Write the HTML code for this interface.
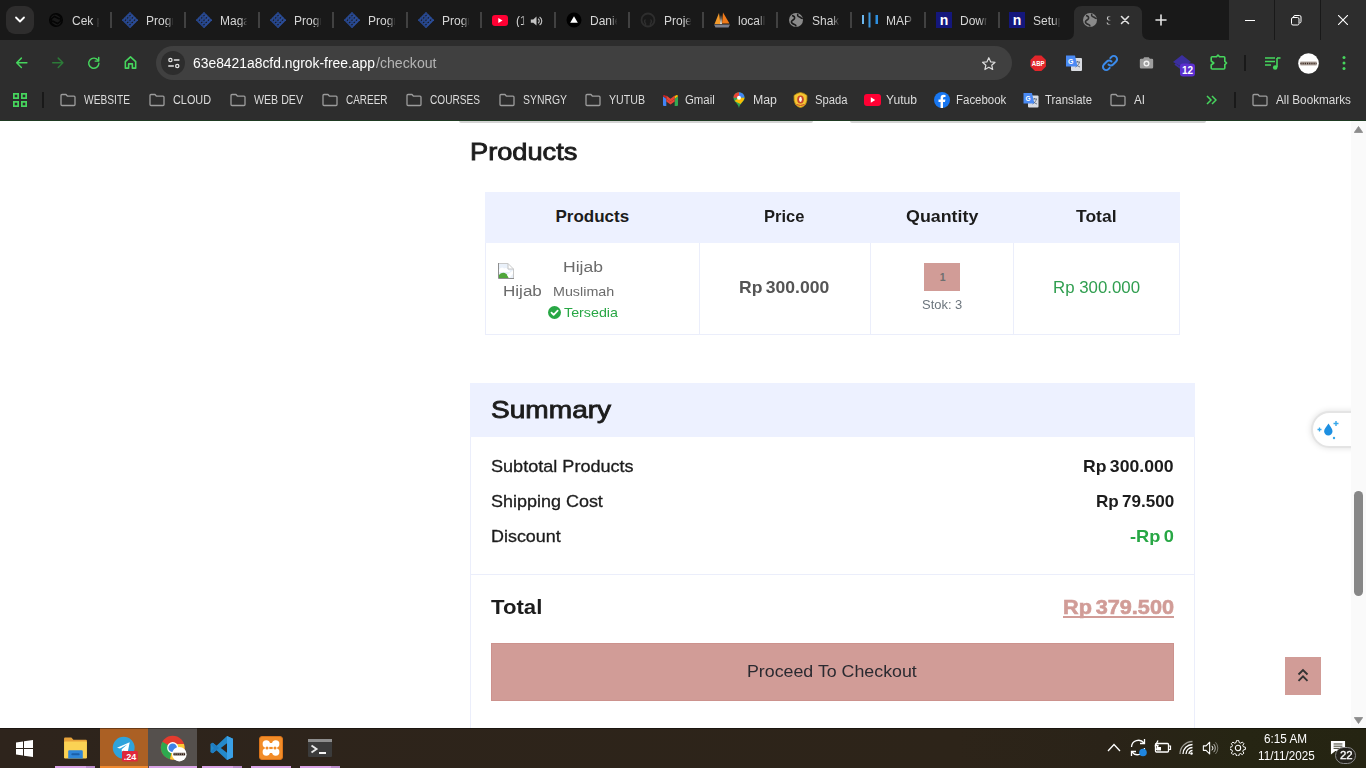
<!DOCTYPE html>
<html lang="id"><head><meta charset="utf-8"><title>Checkout</title>
<style>
html,body{margin:0;padding:0;}
body{width:1366px;height:768px;overflow:hidden;position:relative;background:#fff;font-family:"Liberation Sans",sans-serif;}
.b{position:absolute;display:block;}
.t{position:absolute;white-space:nowrap;line-height:1;display:block;}
</style></head>
<body>
<!-- browser chrome -->
<div id="chrome" class="b" style="left:0;top:0;width:1366px;height:121px;background:#2d2d2d;">
<div class="b" style="left:0px;top:0px;width:1229px;height:40px;background:#191919;"></div>
<div class="b" style="left:1229px;top:0px;width:137px;height:40px;background:#2d2d2d;"></div>
<div class="b" style="left:1274px;top:0px;width:1px;height:40px;background:#191919;"></div>
<div class="b" style="left:1320px;top:0px;width:1px;height:40px;background:#191919;"></div>
<div class="b" style="left:0px;top:120px;width:1366px;height:1px;background:#1f3a22;"></div>
<div class="b" style="left:6px;top:6px;width:28px;height:28px;background:#2e2d2d;border-radius:9px;"></div>
<svg class="b" style="left:14px;top:15px;" width="12" height="10" viewBox="0 0 12 10" ><path d="M2 2.5 L6 6.5 L10 2.5" fill="none" stroke="#fff" stroke-width="1.8" stroke-linecap="round" stroke-linejoin="round"/></svg>
<span class="t" style="left:72px;top:14.9px;font-size:12px;color:#d6d6d6;width:28px;overflow:hidden;-webkit-mask-image:linear-gradient(90deg,#000 72%,transparent 98%);mask-image:linear-gradient(90deg,#000 72%,transparent 98%);">Cek pr</span>
<div class="b" style="left:110px;top:12px;width:2px;height:16px;background:#414141;"></div>
<span class="t" style="left:146px;top:14.9px;font-size:12px;color:#d6d6d6;width:28px;overflow:hidden;-webkit-mask-image:linear-gradient(90deg,#000 72%,transparent 98%);mask-image:linear-gradient(90deg,#000 72%,transparent 98%);">Progr</span>
<div class="b" style="left:184px;top:12px;width:2px;height:16px;background:#414141;"></div>
<span class="t" style="left:220px;top:14.9px;font-size:12px;color:#d6d6d6;width:28px;overflow:hidden;-webkit-mask-image:linear-gradient(90deg,#000 72%,transparent 98%);mask-image:linear-gradient(90deg,#000 72%,transparent 98%);">Magang</span>
<div class="b" style="left:258px;top:12px;width:2px;height:16px;background:#414141;"></div>
<span class="t" style="left:294px;top:14.9px;font-size:12px;color:#d6d6d6;width:28px;overflow:hidden;-webkit-mask-image:linear-gradient(90deg,#000 72%,transparent 98%);mask-image:linear-gradient(90deg,#000 72%,transparent 98%);">Progr</span>
<div class="b" style="left:332px;top:12px;width:2px;height:16px;background:#414141;"></div>
<span class="t" style="left:368px;top:14.9px;font-size:12px;color:#d6d6d6;width:28px;overflow:hidden;-webkit-mask-image:linear-gradient(90deg,#000 72%,transparent 98%);mask-image:linear-gradient(90deg,#000 72%,transparent 98%);">Progr</span>
<div class="b" style="left:406px;top:12px;width:2px;height:16px;background:#414141;"></div>
<span class="t" style="left:442px;top:14.9px;font-size:12px;color:#d6d6d6;width:28px;overflow:hidden;-webkit-mask-image:linear-gradient(90deg,#000 72%,transparent 98%);mask-image:linear-gradient(90deg,#000 72%,transparent 98%);">Progr</span>
<div class="b" style="left:480px;top:12px;width:2px;height:16px;background:#414141;"></div>
<span class="t" style="left:516px;top:14.9px;font-size:12px;color:#d6d6d6;width:9px;overflow:hidden;-webkit-mask-image:linear-gradient(90deg,#000 72%,transparent 98%);mask-image:linear-gradient(90deg,#000 72%,transparent 98%);">(1</span>
<div class="b" style="left:554px;top:12px;width:2px;height:16px;background:#414141;"></div>
<span class="t" style="left:590px;top:14.9px;font-size:12px;color:#d6d6d6;width:28px;overflow:hidden;-webkit-mask-image:linear-gradient(90deg,#000 72%,transparent 98%);mask-image:linear-gradient(90deg,#000 72%,transparent 98%);">Daniel</span>
<div class="b" style="left:628px;top:12px;width:2px;height:16px;background:#414141;"></div>
<span class="t" style="left:664px;top:14.9px;font-size:12px;color:#d6d6d6;width:28px;overflow:hidden;-webkit-mask-image:linear-gradient(90deg,#000 72%,transparent 98%);mask-image:linear-gradient(90deg,#000 72%,transparent 98%);">Projec</span>
<div class="b" style="left:702px;top:12px;width:2px;height:16px;background:#414141;"></div>
<span class="t" style="left:738px;top:14.9px;font-size:12px;color:#d6d6d6;width:28px;overflow:hidden;-webkit-mask-image:linear-gradient(90deg,#000 72%,transparent 98%);mask-image:linear-gradient(90deg,#000 72%,transparent 98%);">locall</span>
<div class="b" style="left:776px;top:12px;width:2px;height:16px;background:#414141;"></div>
<span class="t" style="left:812px;top:14.9px;font-size:12px;color:#d6d6d6;width:28px;overflow:hidden;-webkit-mask-image:linear-gradient(90deg,#000 72%,transparent 98%);mask-image:linear-gradient(90deg,#000 72%,transparent 98%);">Shaki</span>
<div class="b" style="left:850px;top:12px;width:2px;height:16px;background:#414141;"></div>
<span class="t" style="left:886px;top:14.9px;font-size:12px;color:#d6d6d6;width:28px;overflow:hidden;-webkit-mask-image:linear-gradient(90deg,#000 72%,transparent 98%);mask-image:linear-gradient(90deg,#000 72%,transparent 98%);">MAP</span>
<div class="b" style="left:924px;top:12px;width:2px;height:16px;background:#414141;"></div>
<span class="t" style="left:960px;top:14.9px;font-size:12px;color:#d6d6d6;width:28px;overflow:hidden;-webkit-mask-image:linear-gradient(90deg,#000 72%,transparent 98%);mask-image:linear-gradient(90deg,#000 72%,transparent 98%);">Down</span>
<div class="b" style="left:998px;top:12px;width:2px;height:16px;background:#414141;"></div>
<span class="t" style="left:1033px;top:14.9px;font-size:12px;color:#d6d6d6;width:28px;overflow:hidden;-webkit-mask-image:linear-gradient(90deg,#000 72%,transparent 98%);mask-image:linear-gradient(90deg,#000 72%,transparent 98%);">Setup</span>
<svg class="b" style="left:48px;top:12px;" width="16" height="16" viewBox="0 0 16 16" ><g fill="none" stroke="#050505" stroke-width="1.5"><circle cx="8" cy="8" r="6.3"/><path d="M8 1.700 L12.5 4.500 V10 M14.300 8 L9.500 11.500 L4.500 9 M8 14.300 L3.500 11.500 V6 M1.700 8 L6.500 4.500 L11.500 7"/></g></svg>
<svg class="b" style="left:122px;top:12px;" width="16" height="16" viewBox="0 0 16 16" ><g transform="translate(8 8) rotate(45)"><rect x="-5.6" y="-5.6" width="1.9" height="11.2" fill="#2b4d98"/><rect x="-5.6" y="-5.6" width="11.2" height="1.9" fill="#264487"/><rect x="-2.3999999999999995" y="-5.6" width="1.9" height="11.2" fill="#2b4d98"/><rect x="-5.6" y="-2.3999999999999995" width="11.2" height="1.9" fill="#264487"/><rect x="0.8000000000000007" y="-5.6" width="1.9" height="11.2" fill="#2b4d98"/><rect x="-5.6" y="0.8000000000000007" width="11.2" height="1.9" fill="#264487"/><rect x="4.000000000000002" y="-5.6" width="1.9" height="11.2" fill="#2b4d98"/><rect x="-5.6" y="4.000000000000002" width="11.2" height="1.9" fill="#264487"/></g></svg>
<svg class="b" style="left:196px;top:12px;" width="16" height="16" viewBox="0 0 16 16" ><g transform="translate(8 8) rotate(45)"><rect x="-5.6" y="-5.6" width="1.9" height="11.2" fill="#2b4d98"/><rect x="-5.6" y="-5.6" width="11.2" height="1.9" fill="#264487"/><rect x="-2.3999999999999995" y="-5.6" width="1.9" height="11.2" fill="#2b4d98"/><rect x="-5.6" y="-2.3999999999999995" width="11.2" height="1.9" fill="#264487"/><rect x="0.8000000000000007" y="-5.6" width="1.9" height="11.2" fill="#2b4d98"/><rect x="-5.6" y="0.8000000000000007" width="11.2" height="1.9" fill="#264487"/><rect x="4.000000000000002" y="-5.6" width="1.9" height="11.2" fill="#2b4d98"/><rect x="-5.6" y="4.000000000000002" width="11.2" height="1.9" fill="#264487"/></g></svg>
<svg class="b" style="left:270px;top:12px;" width="16" height="16" viewBox="0 0 16 16" ><g transform="translate(8 8) rotate(45)"><rect x="-5.6" y="-5.6" width="1.9" height="11.2" fill="#2b4d98"/><rect x="-5.6" y="-5.6" width="11.2" height="1.9" fill="#264487"/><rect x="-2.3999999999999995" y="-5.6" width="1.9" height="11.2" fill="#2b4d98"/><rect x="-5.6" y="-2.3999999999999995" width="11.2" height="1.9" fill="#264487"/><rect x="0.8000000000000007" y="-5.6" width="1.9" height="11.2" fill="#2b4d98"/><rect x="-5.6" y="0.8000000000000007" width="11.2" height="1.9" fill="#264487"/><rect x="4.000000000000002" y="-5.6" width="1.9" height="11.2" fill="#2b4d98"/><rect x="-5.6" y="4.000000000000002" width="11.2" height="1.9" fill="#264487"/></g></svg>
<svg class="b" style="left:344px;top:12px;" width="16" height="16" viewBox="0 0 16 16" ><g transform="translate(8 8) rotate(45)"><rect x="-5.6" y="-5.6" width="1.9" height="11.2" fill="#2b4d98"/><rect x="-5.6" y="-5.6" width="11.2" height="1.9" fill="#264487"/><rect x="-2.3999999999999995" y="-5.6" width="1.9" height="11.2" fill="#2b4d98"/><rect x="-5.6" y="-2.3999999999999995" width="11.2" height="1.9" fill="#264487"/><rect x="0.8000000000000007" y="-5.6" width="1.9" height="11.2" fill="#2b4d98"/><rect x="-5.6" y="0.8000000000000007" width="11.2" height="1.9" fill="#264487"/><rect x="4.000000000000002" y="-5.6" width="1.9" height="11.2" fill="#2b4d98"/><rect x="-5.6" y="4.000000000000002" width="11.2" height="1.9" fill="#264487"/></g></svg>
<svg class="b" style="left:418px;top:12px;" width="16" height="16" viewBox="0 0 16 16" ><g transform="translate(8 8) rotate(45)"><rect x="-5.6" y="-5.6" width="1.9" height="11.2" fill="#2b4d98"/><rect x="-5.6" y="-5.6" width="11.2" height="1.9" fill="#264487"/><rect x="-2.3999999999999995" y="-5.6" width="1.9" height="11.2" fill="#2b4d98"/><rect x="-5.6" y="-2.3999999999999995" width="11.2" height="1.9" fill="#264487"/><rect x="0.8000000000000007" y="-5.6" width="1.9" height="11.2" fill="#2b4d98"/><rect x="-5.6" y="0.8000000000000007" width="11.2" height="1.9" fill="#264487"/><rect x="4.000000000000002" y="-5.6" width="1.9" height="11.2" fill="#2b4d98"/><rect x="-5.6" y="4.000000000000002" width="11.2" height="1.9" fill="#264487"/></g></svg>
<svg class="b" style="left:492px;top:14.5px;" width="16" height="11" viewBox="0 0 16 11" ><rect x="0" y="0" width="16" height="11" rx="3" fill="#ff0033"/><path d="M6.300 3 L10.500 5.500 L6.300 8Z" fill="#fff"/></svg>
<svg class="b" style="left:529.5px;top:14.5px;" width="13" height="12" viewBox="0 0 16 14" ><path d="M1 5h3l4-3.500v11L4 9H1z" fill="#c4c4c4"/><path d="M10 4.200a3.500 3.500 0 0 1 0 5.600M11.800 2a6 6 0 0 1 0 10" fill="none" stroke="#c4c4c4" stroke-width="1.400"/></svg>
<svg class="b" style="left:566px;top:12px;" width="16" height="16" viewBox="0 0 16 16" ><circle cx="8" cy="8" r="7.500" fill="#000"/><path d="M8 4.200 L11.800 10.800 H4.200Z" fill="#fff"/></svg>
<svg class="b" style="left:640px;top:12px;" width="16" height="16" viewBox="0 0 16 16" ><circle cx="8" cy="8" r="6.500" fill="none" stroke="#2e2e2e" stroke-width="1.800"/><path d="M5.500 14v-2.500c-1-1-1.500-3 0-4M10.500 14v-2.500c1-1 1.500-3 0-4" stroke="#2e2e2e" stroke-width="1.500" fill="none"/></svg>
<svg class="b" style="left:713px;top:12px;" width="18" height="16" viewBox="0 0 18 16" ><path d="M6 1 L7.500 12 H1.500Z" fill="#f39a2b"/><path d="M10 0.500 L16.500 11.500 H9Z" fill="#f07a1a"/><path d="M8 3 L9 12 H7Z" fill="#e8e0d0"/><path d="M1 12.500 h16 l-1.500 3 h-13z" fill="#7d7f8c"/></svg>
<svg class="b" style="left:788px;top:12px;" width="16" height="16" viewBox="0 0 16 16" ><circle cx="8" cy="8" r="7" fill="#8a8a8a"/><path d="M4 3.5c2 .5 3 1.5 2.5 3S4 8 3.5 9.5 5 12 6.5 12.5 8 14.5 8 14.5M10 2c-1 1.5 0 2.500 1.500 3S14 7 14.5 6" fill="none" stroke="#191919" stroke-width="1.6"/></svg>
<svg class="b" style="left:861px;top:12px;" width="18" height="16" viewBox="0 0 18 16" ><rect x="1" y="3" width="2" height="9" fill="#6db7ee"/><rect x="7.500" y="0.500" width="2" height="15" fill="#3c96dd"/><rect x="14.500" y="3" width="2.500" height="9" fill="#2d8fe0"/></svg>
<svg class="b" style="left:936px;top:12px;" width="16" height="16" viewBox="0 0 16 16" ><rect width="16" height="16" fill="#14177c"/><text x="8" y="13" font-family="Liberation Sans, sans-serif" font-weight="700" font-size="14" fill="#fff" text-anchor="middle">n</text></svg>
<svg class="b" style="left:1009px;top:12px;" width="16" height="16" viewBox="0 0 16 16" ><rect width="16" height="16" fill="#14177c"/><text x="8" y="13" font-family="Liberation Sans, sans-serif" font-weight="700" font-size="14" fill="#fff" text-anchor="middle">n</text></svg>
<svg class="b" style="left:1066px;top:6px;" width="84" height="34" viewBox="0 0 84 34" ><path d="M0 34 Q8 34 8 26 V8 Q8 0 16 0 H68 Q76 0 76 8 V26 Q76 34 84 34Z" fill="#2d2d2d"/></svg>
<svg class="b" style="left:1082px;top:12px;" width="16" height="16" viewBox="0 0 16 16" ><circle cx="8" cy="8" r="7" fill="#8a8a8a"/><path d="M4 3.500c2 .5 3 1.500 2.500 3S4 8 3.500 9.500 5 12 6.500 12.500 8 14.500 8 14.500M10 2c-1 1.500 0 2.500 1.500 3S14 7 14.500 6" fill="none" stroke="#2d2d2d" stroke-width="1.600"/></svg>
<span class="t" style="left:1106px;top:14.9px;font-size:12px;color:#e3e3e3;width:5px;overflow:hidden;-webkit-mask-image:linear-gradient(90deg,#000 20%,transparent 100%);mask-image:linear-gradient(90deg,#000 20%,transparent 100%);">S</span>
<svg class="b" style="left:1120px;top:15px;" width="10" height="10" viewBox="0 0 10 10" ><path d="M1.500 1.500 L8.500 8.500 M8.500 1.500 L1.500 8.500" stroke="#e3e3e3" stroke-width="1.600" stroke-linecap="round"/></svg>
<svg class="b" style="left:1155px;top:14px;" width="12" height="12" viewBox="0 0 12 12" ><path d="M6 1 V11 M1 6 H11" stroke="#e3e3e3" stroke-width="1.600" stroke-linecap="round"/></svg>
<svg class="b" style="left:1245px;top:15px;" width="10" height="10" viewBox="0 0 10 10" ><path d="M0 5.500 H10" stroke="#fff" stroke-width="1"/></svg>
<svg class="b" style="left:1291px;top:15px;" width="11" height="11" viewBox="0 0 11 11" ><rect x="0.500" y="2.500" width="7.500" height="7.500" rx="1.500" fill="none" stroke="#fff" stroke-width="1"/><path d="M2.500 2.500 V2 Q2.500 0.500 4 0.500 H8.500 Q10 0.500 10 2 V6.500 Q10 8 8.500 8" fill="none" stroke="#fff" stroke-width="1"/></svg>
<svg class="b" style="left:1338px;top:15px;" width="10" height="10" viewBox="0 0 10 10" ><path d="M0 0 L10 10 M10 0 L0 10" stroke="#fff" stroke-width="1.100"/></svg>
<svg class="b" style="left:15.2px;top:56.2px;" width="13.6" height="13.6" viewBox="0 0 16 16" ><path d="M14 8 H2.500 M7.500 2.500 L2 8 L7.500 13.500" fill="none" stroke="#46d65d" stroke-width="1.700" stroke-linecap="round" stroke-linejoin="round"/></svg>
<svg class="b" style="left:51.2px;top:56.2px;" width="13.6" height="13.6" viewBox="0 0 16 16" ><path d="M2 8 H13.500 M8.500 2.500 L14 8 L8.500 13.500" fill="none" stroke="#2c7a38" stroke-width="1.700" stroke-linecap="round" stroke-linejoin="round"/></svg>
<svg class="b" style="left:87.2px;top:56.2px;" width="13.6" height="13.6" viewBox="0 0 16 16" ><path d="M13.200 5.500 A6 6 0 1 0 14 8.500" fill="none" stroke="#46d65d" stroke-width="1.700" stroke-linecap="round"/><path d="M13.800 1.800 V6 H9.600" fill="none" stroke="#46d65d" stroke-width="1.700" stroke-linecap="round" stroke-linejoin="round"/></svg>
<svg class="b" style="left:122.6px;top:55.2px;" width="15" height="15" viewBox="0 0 16 16" ><path d="M2.500 7 L8 2 L13.500 7 V14 H10 V9.500 H6 V14 H2.500Z" fill="none" stroke="#46d65d" stroke-width="1.700" stroke-linejoin="round"/></svg>
<div class="b" style="left:156px;top:46px;width:856px;height:34px;background:#404040;border-radius:17px;"></div>
<div class="b" style="left:161px;top:51px;width:24px;height:24px;background:#2d2d2d;border-radius:12px;"></div>
<svg class="b" style="left:166.5px;top:56.8px;" width="13.7" height="12" viewBox="0 0 16 14" ><g stroke="#e3e3e3" stroke-width="1.500" fill="none" stroke-linecap="round"><circle cx="4" cy="3.500" r="1.900"/><path d="M8.500 3.500 H14"/><circle cx="12" cy="10.500" r="1.900"/><path d="M2 10.500 H7.500"/></g></svg>
<span class="t" style="left:192.50px;top:56.15px;font-size:14px;color:#ffffff;transform:scaleX(0.9905);transform-origin:0 0;">63e8421a8cfd.ngrok-free.app</span>
<span class="t" style="left:375.50px;top:56.15px;font-size:14px;color:#b4b4b4;transform:scaleX(1.0104);transform-origin:0 0;">/checkout</span>
<svg class="b" style="left:980.7px;top:55.5px;" width="15.6" height="15.6" viewBox="0 0 18 18" ><path d="M9 2 L11.100 6.700 L16.200 7.200 L12.400 10.600 L13.500 15.600 L9 13 L4.500 15.600 L5.600 10.600 L1.800 7.200 L6.900 6.700Z" fill="none" stroke="#dcdcdc" stroke-width="1.400" stroke-linejoin="round"/></svg>
<svg class="b" style="left:1029.8px;top:54.6px;" width="16.4" height="16.4" viewBox="0 0 18 18" ><path d="M5.500 0.500 H12.500 L17.500 5.500 V12.500 L12.500 17.500 H5.500 L0.500 12.500 V5.500Z" fill="#e2262b"/><text x="9" y="11.800" font-family="Liberation Sans, sans-serif" font-weight="700" font-size="7.500" fill="#fff" text-anchor="middle" textLength="14" lengthAdjust="spacingAndGlyphs">ABP</text></svg>
<svg class="b" style="left:1065px;top:54px;" width="18" height="18" viewBox="0 0 18 18" ><rect x="6" y="4" width="11" height="13" rx="1" fill="#d9dce2"/><path d="M10 8 h5 M12.500 7 v1 M10.500 13 c2-1 3.500-3 4-5 M11 10 c1 1.500 2.500 2.500 4 3" stroke="#5f6b7a" stroke-width="0.900" fill="none"/><path d="M1 1.500 h9 l2.500 11 H1z" fill="#4a8af4"/><text x="5.700" y="9.500" font-family="Liberation Sans, sans-serif" font-weight="700" font-size="7" fill="#fff" text-anchor="middle">G</text></svg>
<svg class="b" style="left:1101px;top:54px;" width="18" height="18" viewBox="0 0 18 18" ><g fill="none" stroke="#3b8beb" stroke-width="2" stroke-linecap="round"><path d="M7.500 10.500 a3.200 3.200 0 0 0 4.600 0 l3-3 a3.200 3.200 0 0 0 -4.600 -4.600 l-1.200 1.200"/><path d="M10.500 7.500 a3.200 3.200 0 0 0 -4.600 0 l-3 3 a3.200 3.200 0 0 0 4.600 4.600 l1.200 -1.200"/></g></svg>
<svg class="b" style="left:1138.5px;top:56px;" width="15" height="14" viewBox="0 0 18 16" ><path d="M1 4.500 Q1 3 2.500 3 H5 L6.200 1 H11.800 L13 3 H15.500 Q17 3 17 4.500 V13 Q17 14.500 15.500 14.500 H2.500 Q1 14.500 1 13Z" fill="#9e9e9e"/><circle cx="9" cy="8.700" r="3.600" fill="#f2f2f2"/><circle cx="9" cy="8.700" r="1.900" fill="#9e9e9e"/></svg>
<svg class="b" style="left:1172px;top:53.5px;" width="24" height="24" viewBox="0 0 24 24" ><path d="M1 8 L10 1 L19 8 L10 13Z" fill="#3b2f9e"/><path d="M3 10 L10 15 L17 10" fill="none" stroke="#3b2f9e" stroke-width="2"/><rect x="8" y="9.500" width="15" height="13" rx="3" fill="#5b2fd0"/><text x="15.500" y="20" font-family="Liberation Sans, sans-serif" font-weight="700" font-size="10" fill="#fff" text-anchor="middle">12</text></svg>
<svg class="b" style="left:1209px;top:52px;" width="20" height="20" viewBox="0 0 20 20" ><path d="M3.200 4.800 H7.500 L9 3 L10.500 4.800 H14.800 Q15.800 4.800 15.800 5.800 V9.300 L17.600 11 L15.800 12.700 V16 Q15.800 17 14.800 17 H3.200 Q2.200 17 2.200 16 V13 L4.800 11 L2.200 9 V5.800 Q2.200 4.800 3.200 4.800Z" fill="none" stroke="#46d65d" stroke-width="1.600" stroke-linejoin="round"/></svg>
<div class="b" style="left:1244px;top:55px;width:2px;height:16px;background:#191919;"></div>
<svg class="b" style="left:1264px;top:56px;" width="18" height="16" viewBox="0 0 18 16" ><g stroke="#46d65d" stroke-width="1.600" fill="none"><path d="M1 2 H11 M1 5.500 H11 M1 9 H7"/><path d="M13 2 V11"/><path d="M13 2 H16.500"/></g><circle cx="11.200" cy="11.500" r="2.300" fill="#46d65d"/></svg>
<svg class="b" style="left:1297.5px;top:52.5px;" width="21" height="21" viewBox="0 0 22 22" ><circle cx="11" cy="11" r="10.800" fill="#fff"/><rect x="2.500" y="9" width="17" height="4" fill="#8a7a70" opacity=".75"/><path d="M2.500 11 h17" stroke="#3a2a22" stroke-width="1.600" stroke-dasharray="1.200 1.100"/></svg>
<svg class="b" style="left:1342px;top:55px;" width="4" height="16" viewBox="0 0 4 16" ><circle cx="2" cy="2.600" r="1.500" fill="#46d65d"/><circle cx="2" cy="8" r="1.500" fill="#46d65d"/><circle cx="2" cy="13.400" r="1.500" fill="#46d65d"/></svg>
<svg class="b" style="left:12px;top:92px;" width="16" height="16" viewBox="0 0 16 16" ><g fill="none" stroke="#46d65d" stroke-width="1.700"><rect x="1.850" y="1.850" width="4.300" height="4.300"/><rect x="9.850" y="1.850" width="4.300" height="4.300"/><rect x="1.850" y="9.850" width="4.300" height="4.300"/><rect x="9.850" y="9.850" width="4.300" height="4.300"/></g></svg>
<div class="b" style="left:42px;top:92px;width:2px;height:16px;background:#191919;"></div>
<svg class="b" style="left:60px;top:93px;" width="16" height="14" viewBox="0 0 16 14" ><path d="M1 2.500 Q1 1.500 2 1.500 H6 L7.500 3.200 H14 Q15 3.200 15 4.200 V11.500 Q15 12.500 14 12.500 H2 Q1 12.500 1 11.500Z" fill="none" stroke="#9c9c9c" stroke-width="1.300" stroke-linejoin="round"/></svg>
<span class="t" style="left:84.00px;top:93.84px;font-size:12px;color:#dcdcdc;transform:scaleX(0.8519);transform-origin:0 0;">WEBSITE</span>
<svg class="b" style="left:149px;top:93px;" width="16" height="14" viewBox="0 0 16 14" ><path d="M1 2.500 Q1 1.500 2 1.500 H6 L7.500 3.200 H14 Q15 3.200 15 4.200 V11.500 Q15 12.500 14 12.500 H2 Q1 12.500 1 11.500Z" fill="none" stroke="#9c9c9c" stroke-width="1.300" stroke-linejoin="round"/></svg>
<span class="t" style="left:173.00px;top:93.84px;font-size:12px;color:#dcdcdc;transform:scaleX(0.9048);transform-origin:0 0;">CLOUD</span>
<svg class="b" style="left:230px;top:93px;" width="16" height="14" viewBox="0 0 16 14" ><path d="M1 2.500 Q1 1.500 2 1.500 H6 L7.500 3.200 H14 Q15 3.200 15 4.200 V11.500 Q15 12.500 14 12.500 H2 Q1 12.500 1 11.500Z" fill="none" stroke="#9c9c9c" stroke-width="1.300" stroke-linejoin="round"/></svg>
<span class="t" style="left:254.00px;top:93.84px;font-size:12px;color:#dcdcdc;transform:scaleX(0.8849);transform-origin:0 0;">WEB DEV</span>
<svg class="b" style="left:322px;top:93px;" width="16" height="14" viewBox="0 0 16 14" ><path d="M1 2.500 Q1 1.500 2 1.500 H6 L7.500 3.200 H14 Q15 3.200 15 4.200 V11.500 Q15 12.500 14 12.500 H2 Q1 12.500 1 11.500Z" fill="none" stroke="#9c9c9c" stroke-width="1.300" stroke-linejoin="round"/></svg>
<span class="t" style="left:346.00px;top:93.84px;font-size:12px;color:#dcdcdc;transform:scaleX(0.8300);transform-origin:0 0;">CAREER</span>
<svg class="b" style="left:406px;top:93px;" width="16" height="14" viewBox="0 0 16 14" ><path d="M1 2.500 Q1 1.500 2 1.500 H6 L7.500 3.200 H14 Q15 3.200 15 4.200 V11.500 Q15 12.500 14 12.500 H2 Q1 12.500 1 11.500Z" fill="none" stroke="#9c9c9c" stroke-width="1.300" stroke-linejoin="round"/></svg>
<span class="t" style="left:430.00px;top:93.84px;font-size:12px;color:#dcdcdc;transform:scaleX(0.8421);transform-origin:0 0;">COURSES</span>
<svg class="b" style="left:499px;top:93px;" width="16" height="14" viewBox="0 0 16 14" ><path d="M1 2.500 Q1 1.500 2 1.500 H6 L7.500 3.200 H14 Q15 3.200 15 4.200 V11.500 Q15 12.500 14 12.500 H2 Q1 12.500 1 11.500Z" fill="none" stroke="#9c9c9c" stroke-width="1.300" stroke-linejoin="round"/></svg>
<span class="t" style="left:523.00px;top:93.84px;font-size:12px;color:#dcdcdc;transform:scaleX(0.8691);transform-origin:0 0;">SYNRGY</span>
<svg class="b" style="left:585px;top:93px;" width="16" height="14" viewBox="0 0 16 14" ><path d="M1 2.500 Q1 1.500 2 1.500 H6 L7.500 3.200 H14 Q15 3.200 15 4.200 V11.500 Q15 12.500 14 12.500 H2 Q1 12.500 1 11.500Z" fill="none" stroke="#9c9c9c" stroke-width="1.300" stroke-linejoin="round"/></svg>
<span class="t" style="left:609.00px;top:93.84px;font-size:12px;color:#dcdcdc;transform:scaleX(0.8862);transform-origin:0 0;">YUTUB</span>
<svg class="b" style="left:1110px;top:93px;" width="16" height="14" viewBox="0 0 16 14" ><path d="M1 2.500 Q1 1.500 2 1.500 H6 L7.500 3.200 H14 Q15 3.200 15 4.200 V11.500 Q15 12.500 14 12.500 H2 Q1 12.500 1 11.500Z" fill="none" stroke="#9c9c9c" stroke-width="1.300" stroke-linejoin="round"/></svg>
<span class="t" style="left:1134.00px;top:93.84px;font-size:12px;color:#dcdcdc;transform:scaleX(0.9670);transform-origin:0 0;">AI</span>
<svg class="b" style="left:1252px;top:93px;" width="16" height="14" viewBox="0 0 16 14" ><path d="M1 2.500 Q1 1.500 2 1.500 H6 L7.500 3.200 H14 Q15 3.200 15 4.200 V11.500 Q15 12.500 14 12.500 H2 Q1 12.500 1 11.500Z" fill="none" stroke="#9c9c9c" stroke-width="1.300" stroke-linejoin="round"/></svg>
<span class="t" style="left:1276.00px;top:93.84px;font-size:12px;color:#dcdcdc;transform:scaleX(0.9772);transform-origin:0 0;">All Bookmarks</span>
<svg class="b" style="left:663px;top:94.5px;" width="15" height="11" viewBox="0 0 15 11" ><path d="M0 1.300 L3.300 3.700 V11 H1 Q0 11 0 10Z" fill="#4285f4"/><path d="M15 1.300 L11.700 3.700 V11 H14 Q15 11 15 10Z" fill="#34a853"/><path d="M3.300 3.700 L7.500 6.800 L11.700 3.700 V0.600 L7.500 3.700 L3.300 0.600Z" fill="#ea4335"/><path d="M0 1.300 Q0 0 1.300 0 Q1.800 0 2.300 .4 L3.300 1.100 V3.700 L0 1.300Z" fill="#c5221f"/><path d="M15 1.300 Q15 0 13.700 0 Q13.200 0 12.700 .4 L11.700 1.100 V3.700 L15 1.300Z" fill="#fbbc04"/><path d="M3.300 3.700 V6.500 L7.500 9.500 L11.700 6.500 V3.700 L7.500 6.800Z" fill="#ea4335"/></svg>
<span class="t" style="left:684.50px;top:93.84px;font-size:12px;color:#dcdcdc;transform:scaleX(0.9498);transform-origin:0 0;">Gmail</span>
<svg class="b" style="left:733px;top:92px;" width="12" height="17" viewBox="0 0 12 17" ><path d="M6 16.500 C6 12 11.500 10 11.500 5.700 A5.500 5.500 0 0 0 0.500 5.700 C0.500 10 6 12 6 16.500Z" fill="#34a853"/><path d="M6 0.200 A5.500 5.500 0 0 0 0.500 5.700 L6 5.700Z" fill="#ea4335"/><path d="M6 0.200 A5.500 5.500 0 0 1 11.500 5.700 L6 5.700Z" fill="#4285f4"/><path d="M1.500 9 L6 5.700 L11.500 5.700 C11.500 8 9 10 7.500 12Z" fill="#fbbc04"/><circle cx="6" cy="5.700" r="2" fill="#fff"/></svg>
<span class="t" style="left:753.00px;top:93.84px;font-size:12px;color:#dcdcdc;transform:scaleX(1.0267);transform-origin:0 0;">Map</span>
<svg class="b" style="left:792.5px;top:92px;" width="15" height="16" viewBox="0 0 15 16" ><path d="M7.500 0.500 Q11 0.800 14 3.500 Q14.500 9 12.500 12.500 Q10.500 15 7.500 15.500 Q4.500 15 2.500 12.500 Q0.500 9 1 3.500 Q4 0.800 7.500 0.500Z" fill="#f4c531" stroke="#b58a12" stroke-width="0.800"/><ellipse cx="7.500" cy="7.500" rx="3.300" ry="4" fill="#c8452d"/><ellipse cx="7.500" cy="7.300" rx="1.400" ry="2.600" fill="#fff6e0"/><path d="M3.500 12.500 Q7.500 14.500 11.500 12.500" stroke="#c8452d" stroke-width="1" fill="none"/></svg>
<span class="t" style="left:814.50px;top:93.84px;font-size:12px;color:#dcdcdc;transform:scaleX(0.9353);transform-origin:0 0;">Spada</span>
<svg class="b" style="left:864px;top:94px;" width="17" height="12" viewBox="0 0 17 12" ><rect width="17" height="12" rx="3" fill="#ff0033"/><path d="M6.800 3.300 L11.200 6 L6.800 8.700Z" fill="#fff"/></svg>
<span class="t" style="left:886.00px;top:93.84px;font-size:12px;color:#dcdcdc;transform:scaleX(1.0081);transform-origin:0 0;">Yutub</span>
<svg class="b" style="left:934px;top:92px;" width="16" height="16" viewBox="0 0 16 16" ><circle cx="8" cy="8" r="8" fill="#1877f2"/><path d="M9 16 V10 H11 L11.400 7.500 H9 V6.200 Q9 5 10.300 5 H11.500 V2.900 Q10.500 2.700 9.500 2.700 Q6.600 2.700 6.600 5.800 V7.500 H4.500 V10 H6.600 V16Z" fill="#fff"/></svg>
<span class="t" style="left:956.00px;top:93.84px;font-size:12px;color:#dcdcdc;transform:scaleX(0.9551);transform-origin:0 0;">Facebook</span>
<svg class="b" style="left:1023px;top:92px;" width="16" height="16" viewBox="0 0 16 16" ><rect x="5" y="3.500" width="10.500" height="12" rx="1" fill="#d9dce2"/><path d="M9 7 h5 M11.500 6 v1 M9.500 12 c2-1 3.500-3 4-5 M10 9 c1 1.500 2.500 2.500 4 3" stroke="#5f6b7a" stroke-width="0.900" fill="none"/><path d="M0.500 1 h8.500 l2.300 10.500 H0.500z" fill="#4a8af4"/><text x="5" y="8.700" font-family="Liberation Sans, sans-serif" font-weight="700" font-size="6.500" fill="#fff" text-anchor="middle">G</text></svg>
<span class="t" style="left:1045.00px;top:93.84px;font-size:12px;color:#dcdcdc;transform:scaleX(0.9471);transform-origin:0 0;">Translate</span>
<svg class="b" style="left:1206px;top:95px;" width="11" height="10" viewBox="0 0 11 10" ><path d="M1 1 L5 5 L1 9 M6 1 L10 5 L6 9" fill="none" stroke="#46d65d" stroke-width="1.500"/></svg>
<div class="b" style="left:1234px;top:92px;width:2px;height:16px;background:#191919;"></div>
</div>
<!-- page -->
<div id="page" class="b" style="left:0;top:121px;width:1366px;height:607px;background:#fff;"></div>
<div class="b" style="left:459px;top:121px;width:354px;height:2px;background:#d4d4d4;border-radius:0 0 4px 4px;"></div>
<div class="b" style="left:850px;top:121px;width:356px;height:2px;background:#d4d4d4;border-radius:0 0 4px 4px;"></div>
<span class="t" style="left:470.20px;top:140.08px;font-size:24px;color:#1c1c1c;transform:scaleX(1.1335);transform-origin:0 0;-webkit-text-stroke:0.85px #1c1c1c;">Products</span>
<div class="b" style="left:485px;top:192px;width:695px;height:51px;background:#edf1ff;"></div>
<div class="b" style="left:485px;top:243px;width:695px;height:92px;background:#fff;box-sizing:border-box;border:1px solid #ebeefb;border-top:none;"></div>
<div class="b" style="left:699px;top:243px;width:1px;height:91px;background:#ebeefb;"></div>
<div class="b" style="left:870px;top:243px;width:1px;height:91px;background:#ebeefb;"></div>
<div class="b" style="left:1013px;top:243px;width:1px;height:91px;background:#ebeefb;"></div>
<span class="t" style="left:555.50px;top:208.11px;font-size:17px;color:#1c1c1c;font-weight:700;">Products</span>
<span class="t" style="left:764.30px;top:208.11px;font-size:17px;color:#1c1c1c;transform:scaleX(0.9706);transform-origin:0 0;font-weight:700;">Price</span>
<span class="t" style="left:905.60px;top:208.11px;font-size:17px;color:#1c1c1c;transform:scaleX(1.0493);transform-origin:0 0;font-weight:700;">Quantity</span>
<span class="t" style="left:1076.40px;top:208.11px;font-size:17px;color:#1c1c1c;transform:scaleX(1.0311);transform-origin:0 0;font-weight:700;">Total</span>
<svg class="b" style="left:498px;top:263px;" width="17" height="16" viewBox="0 0 17 16" ><path d="M0.500 0.500 H10 L15.500 6 V15.500 H0.500Z" fill="#eaf1fa"/><path d="M1 7 q2.500-4 5-1.500 q3-1.500 4 1.500 q2 0 2 2 H1z" fill="#fff"/><path d="M1 15 V12 C4 8.500 8 8.500 11.500 15Z" fill="#4fa63a"/><path d="M9 12 L15.500 7 V10 L11 15.500 Z" fill="#fff"/><path d="M10 0.500 V6 H15.500" fill="#fff" stroke="#c4c4c4" stroke-width="1"/><path d="M0.500 0.500 H10 L15.500 6 V15.500" fill="none" stroke="#c9c9c9" stroke-width="1"/><path d="M0.500 0 V15.500 H16" fill="none" stroke="#8e8e8e" stroke-width="1"/></svg>
<span class="t" style="left:502.80px;top:282.68px;font-size:15.5px;color:#6b6b6b;transform:scaleX(1.0996);transform-origin:0 0;">Hijab</span>
<span class="t" style="left:563.00px;top:258.78px;font-size:15.5px;color:#6b6b6b;transform:scaleX(1.1307);transform-origin:0 0;">Hijab</span>
<span class="t" style="left:552.60px;top:284.80px;font-size:13px;color:#6b6b6b;transform:scaleX(1.1002);transform-origin:0 0;">Muslimah</span>
<svg class="b" style="left:547.8px;top:305.6px;" width="13" height="13" viewBox="0 0 12 12" ><circle cx="6" cy="6" r="6" fill="#28a745"/><path d="M3.200 6.200 L5.200 8.200 L8.900 4.200" fill="none" stroke="#fff" stroke-width="1.600" stroke-linecap="round" stroke-linejoin="round"/></svg>
<span class="t" style="left:564.30px;top:305.80px;font-size:13px;color:#28a745;transform:scaleX(1.0972);transform-origin:0 0;">Tersedia</span>
<span class="t" style="left:739.40px;top:278.91px;font-size:17px;color:#555;transform:scaleX(1.0323);transform-origin:0 0;font-weight:700;word-spacing:-1.5px;">Rp 300.000</span>
<div class="b" style="left:924px;top:263px;width:36px;height:28px;background:#d19c97;"></div>
<span class="t" style="left:939.80px;top:271.51px;font-size:10.5px;color:#6f6f6f;font-weight:700;">1</span>
<span class="t" style="left:921.70px;top:298.40px;font-size:13px;color:#6c757d;transform:scaleX(0.9951);transform-origin:0 0;">Stok: 3</span>
<span class="t" style="left:1053.00px;top:278.91px;font-size:17px;color:#2f9e4f;transform:scaleX(0.9900);transform-origin:0 0;">Rp 300.000</span>
<div class="b" style="left:470px;top:383px;width:725px;height:345px;background:#fff;box-sizing:border-box;border:1px solid #ebeefb;border-bottom:none;"></div>
<div class="b" style="left:470px;top:383px;width:725px;height:54px;background:#edf1ff;"></div>
<span class="t" style="left:491.30px;top:397.98px;font-size:24px;color:#1c1c1c;transform:scaleX(1.1703);transform-origin:0 0;-webkit-text-stroke:0.85px #1c1c1c;">Summary</span>
<span class="t" style="left:491.30px;top:457.81px;font-size:17px;color:#1c1c1c;transform:scaleX(1.0629);transform-origin:0 0;-webkit-text-stroke:0.3px #1c1c1c;">Subtotal Products</span>
<span class="t" style="left:491.30px;top:492.61px;font-size:17px;color:#1c1c1c;transform:scaleX(1.0569);transform-origin:0 0;-webkit-text-stroke:0.3px #1c1c1c;">Shipping Cost</span>
<span class="t" style="left:491.30px;top:527.51px;font-size:17px;color:#1c1c1c;transform:scaleX(1.0541);transform-origin:0 0;-webkit-text-stroke:0.3px #1c1c1c;">Discount</span>
<span class="t" style="left:1083.40px;top:457.81px;font-size:17px;color:#1c1c1c;transform:scaleX(1.0369);transform-origin:0 0;font-weight:700;word-spacing:-1.5px;">Rp 300.000</span>
<span class="t" style="left:1095.70px;top:492.61px;font-size:17px;color:#1c1c1c;transform:scaleX(1.0055);transform-origin:0 0;font-weight:700;word-spacing:-1.5px;">Rp 79.500</span>
<span class="t" style="left:1130.00px;top:527.51px;font-size:17px;color:#28a745;transform:scaleX(1.0732);transform-origin:0 0;font-weight:700;word-spacing:-1.5px;">-Rp 0</span>
<div class="b" style="left:471px;top:574px;width:723px;height:1px;background:#ebeefb;"></div>
<span class="t" style="left:491.30px;top:597.17px;font-size:20px;color:#1c1c1c;transform:scaleX(1.1092);transform-origin:0 0;font-weight:700;">Total</span>
<span class="t" style="left:1063.00px;top:597.17px;font-size:20px;color:#d19c97;transform:scaleX(1.0829);transform-origin:0 0;font-weight:700;word-spacing:-2px;-webkit-text-stroke:0.6px #d19c97;">Rp 379.500</span>
<div class="b" style="left:1063px;top:616px;width:111px;height:2px;background:#d19c97;"></div>
<div class="b" style="left:491px;top:643px;width:683px;height:58px;background:#d19c97;box-sizing:border-box;border:1px solid #cc928d;"></div>
<span class="t" style="left:746.80px;top:662.61px;font-size:17px;color:#2a2a30;transform:scaleX(1.0465);transform-origin:0 0;">Proceed To Checkout</span>
<div class="b" style="left:1310.5px;top:410.5px;width:60px;height:37px;background:#fff;border-radius:18.500px;box-sizing:border-box;border:2px solid #e4e4e4;box-shadow:0 0 6px rgba(0,0,0,.13);"></div>
<svg class="b" style="left:1316px;top:418px;" width="26" height="24" viewBox="0 0 26 24" ><path d="M12.500 5.500 C14.500 8.500 16.500 11 16.500 13.300 A4.200 4.200 0 0 1 8.100 13.300 C8.100 11 10.500 8.500 12.500 5.500Z" fill="#1d8fe1"/><path d="M20 3 v5 M17.500 5.500 h5" stroke="#38a8ea" stroke-width="1.400"/><path d="M3.500 9.500 v4 M1.500 11.500 h4" stroke="#38a8ea" stroke-width="1.300"/><circle cx="18" cy="20" r="1.200" fill="#38a8ea"/></svg>
<div class="b" style="left:1351px;top:121px;width:15px;height:607px;background:#fafafa;"></div>
<svg class="b" style="left:1354px;top:126px;" width="9" height="7" viewBox="0 0 9 7" ><path d="M4.500 0.500 L8.700 6.500 H0.300Z" fill="#8b8b8b" stroke="#8b8b8b" stroke-width="0.800" stroke-linejoin="round"/></svg>
<svg class="b" style="left:1354px;top:717px;" width="9" height="7" viewBox="0 0 9 7" ><path d="M4.500 6.500 L8.700 0.500 H0.300Z" fill="#8b8b8b" stroke="#8b8b8b" stroke-width="0.800" stroke-linejoin="round"/></svg>
<div class="b" style="left:1354px;top:491px;width:9px;height:105px;background:#878787;border-radius:4.500px;"></div>
<div class="b" style="left:1285px;top:657px;width:36px;height:38px;background:#d19c97;"></div>
<svg class="b" style="left:1297px;top:668px;" width="12" height="15" viewBox="0 0 12 15" ><path d="M1.500 6.500 L6 2 L10.500 6.500 M1.500 12.800 L6 8.300 L10.500 12.800" fill="none" stroke="#333" stroke-width="1.900"/></svg>
<!-- taskbar -->
<div id="taskbar" class="b" style="left:0;top:728px;width:1366px;height:40px;background:linear-gradient(90deg,#2e241c 0%,#2d2419 70%,#2a2318 81%,#262513 91%,#252412 100%);">
<div class="b" style="left:100px;top:0px;width:48px;height:40px;background:#ab6024;"></div>
<div class="b" style="left:148px;top:0px;width:49px;height:40px;background:#55504d;"></div>
<div class="b" style="left:55px;top:38px;width:40px;height:2px;background:#d9a3e6;"></div>
<div class="b" style="left:100px;top:38px;width:48px;height:2px;background:#f08a30;"></div>
<div class="b" style="left:149px;top:38px;width:48px;height:2px;background:#d9a3e6;"></div>
<div class="b" style="left:202px;top:38px;width:40px;height:2px;background:#d9a3e6;"></div>
<div class="b" style="left:251px;top:38px;width:40px;height:2px;background:#d9a3e6;"></div>
<div class="b" style="left:300px;top:38px;width:40px;height:2px;background:#d9a3e6;"></div>
<div class="b" style="left:86px;top:38px;width:9px;height:2px;background:#b98bc9;"></div>
<div class="b" style="left:233px;top:38px;width:9px;height:2px;background:#b98bc9;"></div>
<div class="b" style="left:331px;top:38px;width:9px;height:2px;background:#b98bc9;"></div>
<svg class="b" style="left:16px;top:12px;" width="17" height="17" viewBox="0 0 17 17" ><path d="M0 2.400 L7 1.400 V8 H0Z M8 1.250 L17 0 V8 H8Z M0 9 H7 V15.600 L0 14.600Z M8 9 H17 V17 L8 15.750Z" fill="#fff"/></svg>
<svg class="b" style="left:62.5px;top:5.8px;" width="25" height="28" viewBox="0 0 24 24" preserveAspectRatio="none"><path d="M1 4 Q1 3 2 3 H8 L10 5 H22 Q23 5 23 6 V8 H1Z" fill="#e8a33a"/><rect x="1" y="6.500" width="22" height="14.500" rx="1" fill="#fbd254"/><path d="M5 21 V15 Q5 14 6 14 H18 Q19 14 19 15 V21Z" fill="#2f86d8"/><rect x="8" y="16.500" width="8" height="1.800" rx="0.900" fill="#1b5fa8"/></svg>
<svg class="b" style="left:112px;top:7px;" width="27" height="28" viewBox="0 0 27 28" ><circle cx="11.700" cy="12.700" r="10.900" fill="#2ea3dc"/><path d="M5 12.700 L17.700 7.300 L15.500 18.300 L11.700 15.400 L9.900 17.200 L9.700 14.200 L15.200 9.400 L8 13.500Z" fill="#fff"/><rect x="10" y="16" width="15.800" height="10.500" rx="1" fill="#e0283c"/><text x="17.900" y="24.700" font-family="Liberation Sans, sans-serif" font-weight="700" font-size="9" fill="#fff" text-anchor="middle">.24</text></svg>
<svg class="b" style="left:160px;top:7px;" width="28" height="28" viewBox="0 0 28 28" ><circle cx="12.700" cy="12.700" r="11.900" fill="#e33b2e"/><path d="M12.700 12.700 L2.400 6.800 A11.900 11.900 0 0 0 10 24.300Z" fill="#2da94f"/><path d="M12.700 12.700 L10 24.300 A11.900 11.900 0 0 0 24 9 L12.700 9Z" fill="#fcc934"/><circle cx="12.700" cy="12.700" r="5.600" fill="#fff"/><circle cx="12.700" cy="12.700" r="4.300" fill="#3f83e8"/><circle cx="19.300" cy="19.200" r="7.300" fill="#fff"/><rect x="13.500" y="17.700" width="11.600" height="3" fill="#6a5a50" opacity=".8"/><path d="M13.500 19.200 h11.600" stroke="#2a1a12" stroke-width="1.400" stroke-dasharray="1.100 1"/></svg>
<svg class="b" style="left:210px;top:7px;" width="24" height="26" viewBox="0 0 24 26" ><path d="M17 1 L23 3.800 V22.200 L17 25 L6.500 15.300 L2.800 18.300 L0.500 17 V9 L2.800 7.700 L6.500 10.700Z" fill="#2489ca"/><path d="M17 8.300 L10.800 13 L17 17.700Z" fill="#2e241c"/><path d="M0.500 9 L2.800 7.700 L9 13 L2.800 18.300 L0.500 17 L4 13Z" fill="#1f7cc0"/><path d="M17 1 L23 3.800 V22.200 L17 25Z" fill="#3aa0e6"/></svg>
<svg class="b" style="left:259px;top:7.7px;" width="24" height="24" viewBox="0 0 24 24" ><rect x="0.500" y="0.500" width="23" height="23" rx="2.500" fill="#f28c28" stroke="#d9731a" stroke-width="1"/><g fill="#fff"><circle cx="7.300" cy="8" r="3.700"/><circle cx="16.700" cy="8" r="3.700"/><circle cx="7.300" cy="16" r="3.700"/><circle cx="16.700" cy="16" r="3.700"/><rect x="6" y="7" width="12" height="10"/></g><g fill="#f28c28"><circle cx="8" cy="12" r="1.500"/><circle cx="16" cy="12" r="1.500"/><rect x="10.300" y="10.900" width="3.400" height="2.200"/><path d="M11 4 h2 v2.500 h-2z M11 17.500 h2 v2.500 h-2z"/></g></svg>
<svg class="b" style="left:308px;top:11px;" width="24" height="18" viewBox="0 0 24 18" ><rect x="0" y="0" width="24" height="18" rx="1" fill="#3b3b3b"/><rect x="0" y="0" width="24" height="3" fill="#8e8e8e"/><path d="M3.500 6.500 L8.500 10 L3.500 13.500" fill="none" stroke="#e8e8e8" stroke-width="1.900"/><path d="M11 14 H18" stroke="#fff" stroke-width="1.900"/></svg>
<svg class="b" style="left:1107px;top:15px;" width="14" height="9" viewBox="0 0 14 9" ><path d="M1 8 L7 1.500 L13 8" fill="none" stroke="#fff" stroke-width="1.300"/></svg>
<svg class="b" style="left:1128px;top:9px;" width="22" height="22" viewBox="0 0 22 22" ><g fill="none" stroke="#fff" stroke-width="1.300"><path d="M3.500 10 A7 7 0 0 1 16 6"/><path d="M16.500 2 V6.500 H12"/><path d="M16.500 11 A7 7 0 0 1 4 15"/><path d="M3.500 19 V14.500 H8"/></g><circle cx="15" cy="15.500" r="3.800" fill="#1f86e0"/></svg>
<svg class="b" style="left:1153px;top:11px;" width="20" height="16" viewBox="0 0 20 16" ><rect x="2.500" y="4.500" width="13" height="8.500" rx="1" fill="none" stroke="#fff" stroke-width="1.300"/><path d="M16 7 H17.500 V10.500 H16" fill="none" stroke="#fff" stroke-width="1.200"/><path d="M5 1.500 L2.500 6.500 H5 L3.500 11" fill="none" stroke="#fff" stroke-width="1.300"/><rect x="4" y="8" width="4" height="3.500" fill="#fff"/></svg>
<svg class="b" style="left:1178px;top:12px;" width="18" height="16" viewBox="0 0 18 16" ><g fill="none" stroke="#fff" stroke-width="1.300"><path d="M2 14 A12.500 12.500 0 0 1 14.500 1.500" opacity=".55"/><path d="M5 14 A9.500 9.500 0 0 1 14.500 4.500"/><path d="M8 14 A6.500 6.500 0 0 1 14.500 7.500"/><path d="M11 14 A3.500 3.500 0 0 1 14.500 10.500"/></g><circle cx="13.500" cy="13.500" r="1.300" fill="#fff"/></svg>
<svg class="b" style="left:1201.5px;top:12px;" width="18" height="16.2" viewBox="0 0 20 18" ><path d="M1.500 6.500 H4.500 L8.500 2.500 V15.500 L4.500 11.500 H1.500Z" fill="none" stroke="#fff" stroke-width="1.200" stroke-linejoin="round"/><g fill="none" stroke="#fff" stroke-width="1.100"><path d="M11 6.500 a3.500 3.500 0 0 1 0 5"/><path d="M13 4.500 a6.500 6.500 0 0 1 0 9" opacity=".7"/><path d="M15 2.500 a9.500 9.500 0 0 1 0 13" opacity=".4"/></g></svg>
<svg class="b" style="left:1230px;top:12px;" width="16" height="16" viewBox="0 0 18 18" ><circle cx="9" cy="9" r="3" fill="none" stroke="#fff" stroke-width="1.200"/><path d="M9 1.500 l1.200 0 .5 2.200 1.600 .7 1.900-1.200 1.700 1.700-1.200 1.900 .7 1.600 2.200 .5 0 2.400-2.200 .5-.7 1.600 1.200 1.900-1.700 1.700-1.900-1.200-1.600 .7-.5 2.200-2.400 0-.5-2.200-1.600-.7-1.900 1.200-1.700-1.700 1.200-1.900-.7-1.600-2.200-.5 0-2.400 2.200-.5 .7-1.600-1.200-1.900 1.700-1.700 1.900 1.200 1.600-.7 .5-2.200z" fill="none" stroke="#fff" stroke-width="1.100" stroke-linejoin="round" transform="translate(-0.600 -0.900) scale(1.020)"/></svg>
<span class="t" style="left:1264.00px;top:4.84px;font-size:12px;color:#fff;transform:scaleX(0.9773);transform-origin:0 0;">6:15 AM</span>
<span class="t" style="left:1257.80px;top:22.44px;font-size:12px;color:#fff;transform:scaleX(0.9734);transform-origin:0 0;">11/11/2025</span>
<svg class="b" style="left:1330px;top:12px;" width="16" height="15" viewBox="0 0 18 17" ><path d="M1 1 H17 V12.500 H6 L1 16.500Z" fill="#fff"/><path d="M4 4.500 H14 M4 7 H14 M4 9.500 H14" stroke="#262513" stroke-width="1"/></svg>
<div class="b" style="left:1335px;top:18.500px;width:21px;height:17px;border-radius:8.500px;background:#25231c;border:1px solid #8a8a8a;box-sizing:border-box;"></div>
<span class="t" style="left:1339.70px;top:21.69px;font-size:11px;color:#fff;transform:scaleX(1.0367);transform-origin:0 0;-webkit-text-stroke:0.3px #fff;">22</span>
<div class="b" style="left:0px;top:0px;width:1366px;height:1px;background:rgba(0,0,0,.38);"></div>
</div>
</body></html>
